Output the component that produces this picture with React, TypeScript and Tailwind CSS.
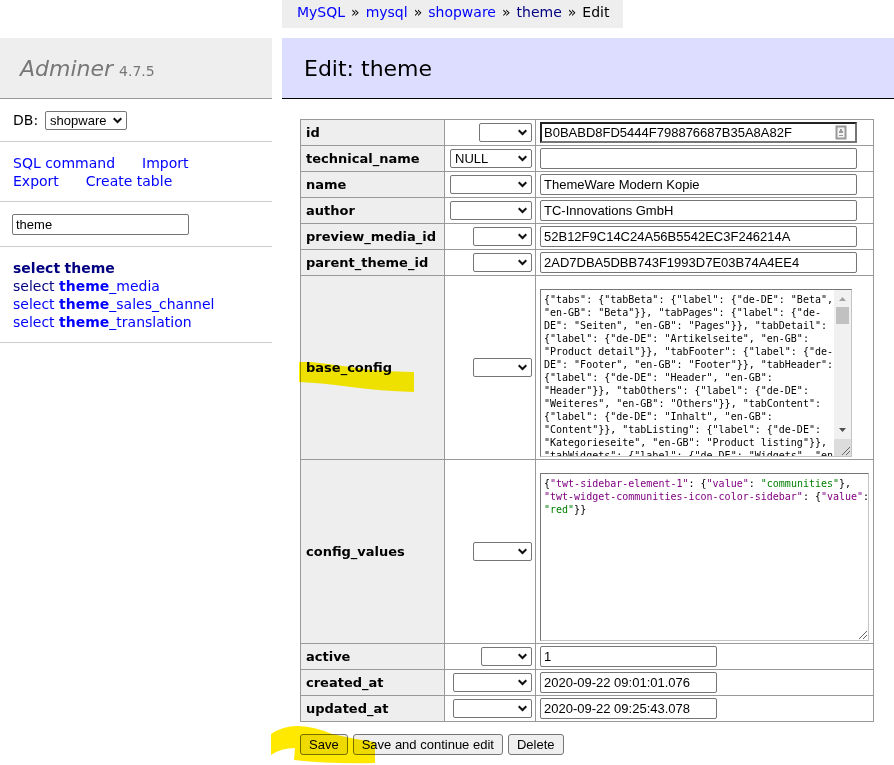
import { ReactNode } from "react";

const sans = "font-['Verdana','DejaVu_Sans',sans-serif]";
const control = "font-['Liberation_Sans',Arial,sans-serif] text-[13px] leading-[15px] text-black";
const mono = "font-['DejaVu_Sans_Mono',monospace] text-[10px] leading-[13px]";
const inset = "border border-t-[#767676] border-l-[#767676] border-r-[#c4c4c4] border-b-[#c4c4c4]";

function Select({ id, label, value = "", width }: { id?: string; label: string; value?: string; width: string }) {
  return (
    <span className={`relative inline-block align-middle ${width}`}>
      <select
        id={id}
        aria-label={label}
        defaultValue={value}
        className={`block h-[19px] w-full appearance-none rounded-xs border border-[#767676] bg-white pl-1 ${control}`}
      >
        <option>{value}</option>
      </select>
      <svg
        className="pointer-events-none absolute top-[6px] right-[5px] h-[7px] w-[9px]"
        viewBox="0 0 9 7"
        fill="none"
        stroke="#111"
        strokeWidth="2"
      >
        <path d="M0.7 1.2 L4.5 5 L8.3 1.2" />
      </svg>
    </span>
  );
}

function Grip() {
  return (
    <svg className="h-[10px] w-[10px]" viewBox="0 0 10 10" stroke="#666" strokeWidth="1">
      <path d="M1 9 L9 1 M5 9 L9 5" />
    </svg>
  );
}

function BadgeIcon() {
  return (
    <svg className="h-[15px] w-[12px]" viewBox="0 0 12 15" fill="none">
      <rect x="1.5" y="1.5" width="9" height="12" fill="#f4f4f4" stroke="#999" strokeWidth="2" />
      <path d="M5 4 H7 V6 H8 V8 H4 V6 H5 Z" fill="#999" />
      <path d="M4 10.5 H8" stroke="#999" />
    </svg>
  );
}

const baseConfig = `{"tabs": {"tabBeta": {"label": {"de-DE": "Beta",
"en-GB": "Beta"}}, "tabPages": {"label": {"de-
DE": "Seiten", "en-GB": "Pages"}}, "tabDetail":
{"label": {"de-DE": "Artikelseite", "en-GB":
"Product detail"}}, "tabFooter": {"label": {"de-
DE": "Footer", "en-GB": "Footer"}}, "tabHeader":
{"label": {"de-DE": "Header", "en-GB":
"Header"}}, "tabOthers": {"label": {"de-DE":
"Weiteres", "en-GB": "Others"}}, "tabContent":
{"label": {"de-DE": "Inhalt", "en-GB":
"Content"}}, "tabListing": {"label": {"de-DE":
"Kategorieseite", "en-GB": "Product listing"}},
"tabWidgets": {"label": {"de-DE": "Widgets", "en`;

function BaseConfig() {
  return (
    <div className={`mt-[11px] flex h-[168px] w-[312px] bg-white ${inset}`}>
      <textarea
        id="base_config"
        defaultValue={baseConfig}
        className={`block min-w-0 flex-1 resize-none overflow-hidden py-[3px] pl-[3px] whitespace-pre outline-none ${mono}`}
      />
      <div className="flex w-[17px] shrink-0 flex-col items-center bg-[#f1f1f1]">
        <svg className="h-[17px] w-[17px] shrink-0" viewBox="0 0 17 17">
          <path d="M5 11 L8.5 7 L12 11 Z" fill="#a3a3a3" />
        </svg>
        <div className="h-[17px] w-[13px] bg-[#c1c1c1]" />
        <svg className="mt-auto h-[17px] w-[17px] shrink-0" viewBox="0 0 17 17">
          <path d="M5 6 L8.5 10 L12 6 Z" fill="#505050" />
        </svg>
        <div className="flex h-[17px] w-full shrink-0 items-end justify-end bg-[#dcdcdc]">
          <Grip />
        </div>
      </div>
    </div>
  );
}

function ConfigValues() {
  const key = "text-[#800080]";
  const val = "text-[#008000]";
  return (
    <div className={`mt-[11px] flex h-[168px] w-[329px] items-end ${inset}`}>
      <div
        id="config_values"
        role="textbox"
        aria-multiline="true"
        aria-labelledby="config_values-label"
        contentEditable
        suppressContentEditableWarning
        className={`h-full min-w-0 flex-1 py-[3px] pl-[3px] whitespace-pre outline-none ${mono}`}
      >
        {"{"}<span className={key}>"twt-sidebar-element-1"</span>{": {"}<span className={key}>"value"</span>{": "}
        <span className={val}>"communities"</span>{"},\n"}
        <span className={key}>"twt-widget-communities-icon-color-sidebar"</span>{": {"}
        <span className={key}>"value"</span>{":\n"}
        <span className={val}>"red"</span>{"}}"}
      </div>
      <Grip />
    </div>
  );
}

type Row = { name: string; select: string; fn?: string; value?: string; width?: string };

const wide = "w-[317px]";
const narrow = "w-[177px]";

const rows: Row[] = [
  { name: "id", select: "w-[53px]", value: "B0BABD8FD5444F798876687B35A8A82F", width: wide },
  { name: "technical_name", select: "w-[82px]", fn: "NULL", value: "", width: wide },
  { name: "name", select: "w-[82px]", value: "ThemeWare Modern Kopie", width: wide },
  { name: "author", select: "w-[82px]", value: "TC-Innovations GmbH", width: wide },
  { name: "preview_media_id", select: "w-[59px]", value: "52B12F9C14C24A56B5542EC3F246214A", width: wide },
  { name: "parent_theme_id", select: "w-[59px]", value: "2AD7DBA5DBB743F1993D7E03B74A4EE4", width: wide },
  { name: "base_config", select: "w-[59px]" },
  { name: "config_values", select: "w-[59px]" },
  { name: "active", select: "w-[51px]", value: "1", width: narrow },
  { name: "created_at", select: "w-[79px]", value: "2020-09-22 09:01:01.076", width: narrow },
  { name: "updated_at", select: "w-[79px]", value: "2020-09-22 09:25:43.078", width: narrow },
];

function Field({ row }: { row: Row }) {
  if (row.name === "base_config") return <BaseConfig />;
  if (row.name === "config_values") return <ConfigValues />;
  const focused = row.name === "id";
  return (
    <div className={`relative ${row.width}`}>
      <input
        id={row.name}
        type="text"
        defaultValue={row.value}
        className={`block h-[21px] w-full bg-white outline-none ${control} ${
          focused
            ? "border-2 border-t-[#222] border-r-[#767676] border-b-[#767676] border-l-[#222] pl-[2px]"
            : "rounded-xs border border-[#767676] pl-[3px]"
        }`}
      />
      {focused && (
        <span className="absolute top-[3px] right-[10px]">
          <BadgeIcon />
        </span>
      )}
    </div>
  );
}

function Link({ children, visited, className = "" }: { children: ReactNode; visited?: boolean; className?: string }) {
  return (
    <a href="#" className={`${visited ? "text-[#000080]" : "text-[#0000ff]"} ${className}`}>
      {children}
    </a>
  );
}

function Button({ children }: { children: ReactNode }) {
  return (
    <button type="button" className={`h-[21px] rounded-[3px] border border-[#767676] bg-[#efefef] px-2 ${control}`}>
      {children}
    </button>
  );
}

function Sidebar() {
  const section = "border-b border-[#ccc]";
  return (
    <aside className="mt-[38px] w-[272px] shrink-0">
      <h1 className="flex items-baseline gap-[6px] border-b border-[#999] bg-[#eee] pt-[17px] pb-[15px] pl-5 text-[22px] leading-7 text-[#777]">
        <i>Adminer</i> <span className="text-[14px] leading-[18px]">4.7.5</span>
      </h1>
      <div className={`flex h-[43px] items-center gap-[7px] pl-[13px] ${section}`}>
        <label htmlFor="db">DB:</label>
        <Select id="db" label="DB" value="shopware" width="w-[82px]" />
      </div>
      <nav className={`pt-3 pb-[11px] pl-[13px] ${section}`}>
        <div className="flex gap-[27px]">
          <Link>SQL command</Link>
          <Link>Import</Link>
        </div>
        <div className="flex gap-[27px]">
          <Link>Export</Link>
          <Link>Create table</Link>
        </div>
      </nav>
      <div className={`pt-3 pb-[11px] pl-3 ${section}`}>
        <input
          aria-label="Filter tables"
          defaultValue="theme"
          className={`block h-[21px] w-[177px] rounded-xs border border-[#767676] bg-white pl-[3px] ${control}`}
        />
      </div>
      <ul className={`pt-3 pb-[11px] pl-[13px] ${section}`}>
        <li>
          <Link visited className="font-bold">select</Link> <Link visited className="font-bold">theme</Link>
        </li>
        <li>
          <Link visited>select</Link> <Link><b>theme</b>_media</Link>
        </li>
        <li>
          <Link>select</Link> <Link><b>theme</b>_sales_channel</Link>
        </li>
        <li>
          <Link>select</Link> <Link><b>theme</b>_translation</Link>
        </li>
      </ul>
    </aside>
  );
}

export default function App() {
  return (
    <div className={`flex min-h-screen gap-[10px] overflow-hidden bg-white text-[14px] leading-[18px] text-black ${sans}`}>
      <Sidebar />
      <main className="min-w-0 flex-1">
        <p className="mb-[10px] flex h-7 w-fit gap-[6px] bg-[#eee] pt-[3px] pr-[14px] pl-[15px]">
          <Link>MySQL</Link>
          <span>»</span>
          <Link>mysql</Link>
          <span>»</span>
          <Link>shopware</Link>
          <span>»</span>
          <Link visited>theme</Link>
          <span>»</span>
          <span>Edit</span>
        </p>
        <h2 className="border-b border-black bg-[#ddf] pt-[17px] pb-[15px] pl-[22px] text-[22px] leading-7">
          Edit: theme
        </h2>
        <form className="pt-5 pl-[18px]">
          <table className="w-[574px] table-fixed border-collapse text-[13px]">
            <colgroup>
              <col className="w-[144px]" />
              <col className="w-[91px]" />
              <col />
            </colgroup>
            <tbody>
              {rows.map((row) => (
                <tr key={row.name}>
                  <th className="border border-[#999] bg-[#eee] px-[5px] py-0 text-left">
                    <span className="relative block">
                      <label id={`${row.name}-label`} htmlFor={row.name}>
                        {row.name}
                      </label>
                      {row.name === "base_config" && (
                        <svg
                          className="pointer-events-none absolute top-[2px] left-[-7px] h-[32px] w-[116px] mix-blend-multiply"
                          viewBox="0 0 116 32"
                        >
                          <path d="M0 1 L12 1 Q38 4 58 7 T115 11 V31 Q80 30 52 26 T0 21 Z" fill="#fff200" />
                        </svg>
                      )}
                    </span>
                  </th>
                  <td className="border border-[#999] py-0 pr-[3px] text-right">
                    <Select label={`${row.name} function`} value={row.fn} width={row.select} />
                  </td>
                  <td className="border border-[#999] px-1 py-[2px]">
                    <Field row={row} />
                  </td>
                </tr>
              ))}
            </tbody>
          </table>
          <div className="relative mt-3 flex items-center gap-[5px]">
            <Button>Save</Button>
            <Button>Save and continue edit</Button>
            <Button>Delete</Button>
            <svg
              className="pointer-events-none absolute top-[-8px] left-[-29px] h-[38px] w-[104px] mix-blend-multiply"
              viewBox="0 0 104 38"
            >
              <path
                d="M0 8 Q12 0 26 0 Q42 0 61 8 Q82 13 104 16 V37 Q60 38 23 34 L24 22 Q10 22 0 29 Z"
                fill="#ffe900"
              />
            </svg>
          </div>
        </form>
      </main>
    </div>
  );
}
